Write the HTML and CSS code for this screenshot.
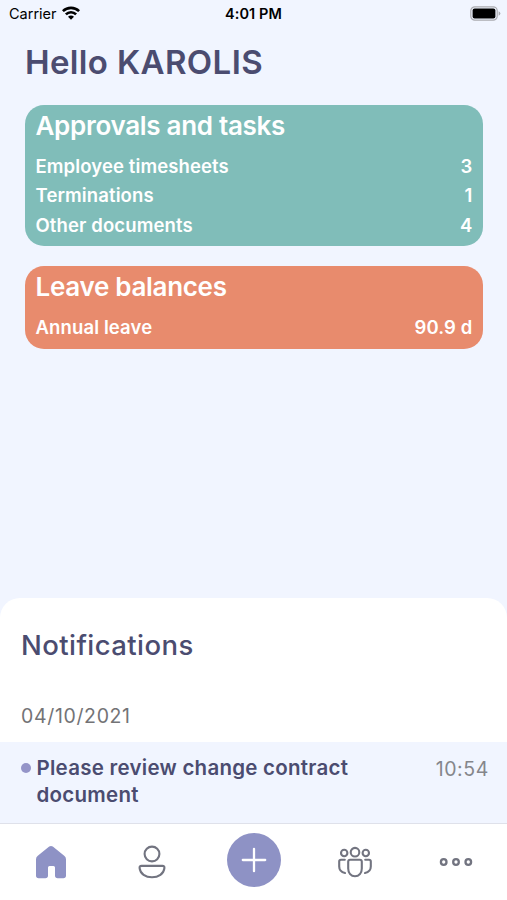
FILE: index.html
```
<!DOCTYPE html>
<html lang="en">
<head>
  <meta charset="UTF-8" />
  <meta name="viewport" content="width=device-width, initial-scale=1" />
  <title>Home</title>
  <link rel="stylesheet" href="styles.css">
</head>
<body>
  <div class="status-bar">
    <div class="carrier">
      <span>Carrier</span>
      <svg width="18" height="14" viewBox="0 0 18 14" fill="none" stroke="#000" stroke-width="2.6">
        <path d="M.9 5.2C5.4 .7 12.6 .7 17.1 5.2" />
        <path d="M3.9 8.4C6.7 5.5 11.3 5.5 14.1 8.4" />
        <path d="M9 13.8L6 10.8C7.7 9.2 10.3 9.2 12 10.8Z" fill="#000" stroke="none" />
      </svg>
    </div>
    <div class="clock">4:01 PM</div>
    <svg class="battery" width="31" height="15" viewBox="0 0 31 15">
      <rect x=".8" y=".8" width="26.4" height="13.4" rx="4" fill="#f1f5ff" stroke="#aaabb0" stroke-width="1.2" />
      <rect x="2.6" y="2.6" width="22.8" height="9.8" rx="2" fill="#000" />
      <path d="M28.6 5.2Q30.4 6 30.4 7.5T28.6 9.8Z" fill="#aaabb0" />
    </svg>
  </div>

  <main class="home">
    <h1 class="greeting">Hello KAROLIS</h1>

    <section class="card card-tasks">
      <h2>Approvals and tasks</h2>
      <div class="row"><span>Employee timesheets</span><span>3</span></div>
      <div class="row"><span>Terminations</span><span>1</span></div>
      <div class="row"><span>Other documents</span><span>4</span></div>
    </section>

    <section class="card card-leave">
      <h2>Leave balances</h2>
      <div class="row"><span>Annual leave</span><span>90.9 d</span></div>
    </section>
  </main>

  <section class="notifications">
    <h2>Notifications</h2>
    <div class="date">04/10/2021</div>
    <div class="item">
      <span class="dot"></span>
      <p>Please review change contract document</p>
      <time>10:54</time>
    </div>
  </section>

  <nav class="tab-bar">
    <a class="tab">
      <svg width="32" height="34" viewBox="0 0 32 34">
        <path d="M14.2 1.6Q16 .2 17.8 1.6L29.2 10.7Q31 12.1 31 14.3V30.5Q31 33.2 28.3 33.2H22.7Q20 33.2 20 30.5V22.5Q20 21 18.5 21H14.5Q13 21 13 22.5V30.5Q13 33.2 10.3 33.2H3.7Q1 33.2 1 30.5V14.3Q1 12.1 2.8 10.7Z" fill="#8e92c5" />
      </svg>
    </a>
    <a class="tab">
      <svg width="28" height="34" viewBox="0 0 28 34" fill="none" stroke="#727480" stroke-width="2.1">
        <circle cx="14" cy="9" r="7.4" />
        <path d="M3.5 20.9H24.5Q26.7 20.9 26.4 23.2C25.8 28.8 20.5 32.3 14 32.3S2.2 28.8 1.6 23.2Q1.3 20.9 3.5 20.9Z" />
      </svg>
    </a>
    <a class="tab add">
      <svg width="26" height="26" viewBox="0 0 26 26" stroke="#fff" stroke-width="2.3" stroke-linecap="round">
        <path d="M13 1.8V24.2M1.8 13H24.2" />
      </svg>
    </a>
    <a class="tab">
      <svg width="34" height="32" viewBox="0 0 34 32" fill="none" stroke="#727480" stroke-width="2.1" stroke-linecap="round">
        <circle cx="17" cy="6.2" r="4.3" />
        <circle cx="6.2" cy="7" r="3.2" />
        <circle cx="27.8" cy="7" r="3.2" />
        <path d="M12.2 13.8H21.8Q23.8 13.8 23.8 15.8V22.5C23.8 27 21 30.2 17 30.2S10.2 27 10.2 22.5V15.8Q10.2 13.8 12.2 13.8Z" />
        <path d="M6.8 13.8H3Q1.2 13.8 1.2 15.6V20.5Q1.2 25.8 7 27" />
        <path d="M27.2 13.8H31Q32.8 13.8 32.8 15.6V20.5Q32.8 25.8 27 27" />
      </svg>
    </a>
    <a class="tab">
      <svg width="34" height="10" viewBox="0 0 34 10" fill="none" stroke="#727480" stroke-width="2.3">
        <circle cx="4.7" cy="5" r="2.8" />
        <circle cx="17" cy="5" r="2.8" />
        <circle cx="29.3" cy="5" r="2.8" />
      </svg>
    </a>
  </nav>
</body>
</html>
```
FILE: styles.css
```
* {
  box-sizing: border-box;
}

body {
  margin: 0;
  height: 900px;
  display: flex;
  flex-direction: column;
  overflow: hidden;
  background-color: #f1f5ff;
  font-family: Inter, "Liberation Sans", sans-serif;
  color: #4b4c70;
}

h1, h2, p {
  margin: 0;
}

.status-bar {
  height: 28px;
  padding: 0 6px 2px 9px;
  display: grid;
  grid-template-columns: 1fr auto 1fr;
  align-items: center;
  font-size: 14.5px;
  color: #000;
}

.carrier {
  display: flex;
  align-items: center;
  gap: 5px;
}

.clock {
  margin-right: 3px;
  font-weight: 600;
  letter-spacing: 0.1px;
}

.battery {
  justify-self: end;
}

.home {
  flex: 1;
  padding: 11px 24.5px 0 25px;
}

.greeting {
  height: 65.5px;
  line-height: 46px;
  font-size: 33px;
  font-weight: 600;
  letter-spacing: 0.37px;
}

.card {
  margin-bottom: 19.5px;
  padding: 4.5px 10px 6px 10.5px;
  border-radius: 19px;
  color: #fff;
}

.card-tasks {
  height: 141.5px;
  background-color: #80bdb9;
}

.card-leave {
  height: 83px;
  background-color: #e88b6d;
}

.card h2 {
  height: 43px;
  line-height: 34px;
  font-size: 26px;
  font-weight: 600;
  letter-spacing: -0.3px;
}

.row {
  display: flex;
  justify-content: space-between;
  line-height: 29.3px;
  font-size: 18.5px;
  font-weight: 600;
  letter-spacing: 0.12px;
}

.notifications {
  height: 225px;
  border-radius: 20px 20px 0 0;
  background-color: #fff;
}

.notifications h2 {
  height: 101px;
  padding: 28px 21px 0;
  line-height: 38px;
  font-size: 27.5px;
  font-weight: 500;
  letter-spacing: 0.42px;
}

.date {
  height: 43px;
  padding: 0 21px;
  line-height: 34px;
  font-size: 19.5px;
  letter-spacing: 0.65px;
  color: #737376;
}

.item {
  height: 81px;
  padding: 13px 18px 0 20.5px;
  display: flex;
  align-items: flex-start;
  background-color: #f1f5ff;
  line-height: 26.5px;
}

.dot {
  flex: none;
  width: 10px;
  height: 10px;
  margin: 8px 6px 0 0;
  border-radius: 50%;
  background-color: #9494c8;
}

.item p {
  width: 330px;
  font-size: 20.5px;
  font-weight: 600;
  letter-spacing: 0.26px;
}

.item time {
  margin-left: auto;
  padding-top: 1px;
  font-size: 19.5px;
  letter-spacing: 0.6px;
  color: #85868b;
}

.tab-bar {
  height: 77px;
  display: grid;
  grid-template-columns: repeat(5, 1fr);
  align-items: center;
  justify-items: center;
  border-top: 1px solid #dfe1ea;
  background-color: #fff;
}

.tab {
  display: flex;
  align-items: center;
  justify-content: center;
}

.add {
  width: 54px;
  height: 54px;
  margin: 0 0 4px 1px;
  border-radius: 50%;
  background-color: #8e92c5;
}
```
